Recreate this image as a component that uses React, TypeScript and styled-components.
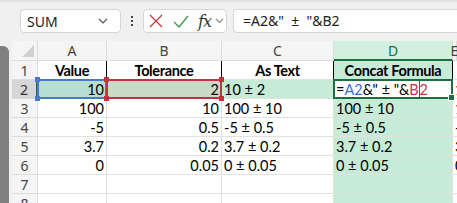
import React from 'react';
import styled, { createGlobalStyle, css } from 'styled-components';

const GlobalStyle = createGlobalStyle`
  html, body {
    margin: 0;
    padding: 0;
    background: #f0f0f0;
    overflow: hidden;
  }
  body {
    font-family: "Noto Sans", "Open Sans", sans-serif;
  }
`;

const DARK_GREEN = '#1e6e42';
const GRID_LINE = '#e1e1e1';
const COL_FILL = '#c6ebd7';

interface CellDef {
  text: React.ReactNode;
  align?: 'left' | 'right' | 'center';
  fill?: string;
  mark?: 'blue' | 'red' | 'active';
  bold?: boolean;
  edge?: boolean;
}

const rows: CellDef[][] = [
  [
    { text: 'Value', align: 'center', bold: true, edge: true },
    { text: 'Tolerance', align: 'center', bold: true, edge: true },
    { text: 'As Text', align: 'center', bold: true, edge: true },
    { text: 'Concat Formula', align: 'center', bold: true, edge: true, fill: COL_FILL },
    { text: '' },
  ],
  [
    { text: '10', align: 'right', fill: '#b5dfd3', mark: 'blue' },
    { text: '2', align: 'right', fill: '#c9dbc7', mark: 'red' },
    { text: '10 ± 2', fill: COL_FILL },
    { text: 'formula', mark: 'active', fill: '#fff' },
    { text: '10 ± 2' },
  ],
  [
    { text: '100', align: 'right' },
    { text: '10', align: 'right' },
    { text: '100 ± 10' },
    { text: '100 ± 10', fill: COL_FILL },
    { text: '100 ± 10' },
  ],
  [
    { text: '-5', align: 'right' },
    { text: '0.5', align: 'right' },
    { text: '-5 ± 0.5' },
    { text: '-5 ± 0.5', fill: COL_FILL },
    { text: '-5 ± 0.5' },
  ],
  [
    { text: '3.7', align: 'right' },
    { text: '0.2', align: 'right' },
    { text: '3.7 ± 0.2' },
    { text: '3.7 ± 0.2', fill: COL_FILL },
    { text: '3.7 ± 0.2' },
  ],
  [
    { text: '0', align: 'right' },
    { text: '0.05', align: 'right' },
    { text: '0 ± 0.05' },
    { text: '0 ± 0.05', fill: COL_FILL },
    { text: '0 ± 0.05' },
  ],
  [{ text: '' }, { text: '' }, { text: '' }, { text: '', fill: COL_FILL }, { text: '' }],
  [{ text: '' }, { text: '' }, { text: '' }, { text: '', fill: COL_FILL }, { text: '' }],
];

const columns = ['A', 'B', 'C', 'D', 'E'];

export default function App() {
  return (
    <>
      <GlobalStyle />
      <Page>
        <Toolbar>
          <NameBox>
            <span>SUM</span>
            <svg width="10" height="6" viewBox="0 0 10 6">
              <path d="M1 1l4 4 4-4" fill="none" stroke="#555" strokeWidth="1.2" />
            </svg>
          </NameBox>
          <Dots>
            <i />
            <i />
            <i />
          </Dots>
          <IconBox>
            <svg width="14" height="14" viewBox="0 0 14 14">
              <path d="M1 1l12 12M13 1L1 13" stroke="#d13438" strokeWidth="1.3" />
            </svg>
            <svg width="16" height="13" viewBox="0 0 16 13">
              <path d="M1 7l5 5L15 1" fill="none" stroke="#3a9a4a" strokeWidth="1.3" />
            </svg>
            <Fx>fx</Fx>
            <svg width="9" height="6" viewBox="0 0 9 6">
              <path d="M1 1l3.5 3.5L8 1" fill="none" stroke="#888" strokeWidth="1.1" />
            </svg>
          </IconBox>
          <FormulaInput>=A2&amp;"&nbsp;&nbsp;±&nbsp;&nbsp;"&amp;B2</FormulaInput>
        </Toolbar>
        <Sheet>
          <Strip />
          <Grid>
            <Corner>
              <svg width="12" height="12" viewBox="0 0 12 12">
                <path d="M12 0V12H0Z" fill="#d0d0d0" />
              </svg>
            </Corner>
            {columns.map((c) => (
              <ColHeader key={c} $active={c === 'D'}>
                {c}
              </ColHeader>
            ))}
            {rows.map((row, r) => (
              <React.Fragment key={r}>
                <RowHeader $active={r === 1}>{r + 1}</RowHeader>
                {row.map((cell, i) => (
                  <Cell
                    key={i}
                    $align={cell.align ?? 'left'}
                    $fill={cell.fill}
                    $mark={cell.mark}
                    $bold={cell.bold}
                    $edge={cell.edge}
                  >
                    {cell.mark === 'active' ? (
                      <Formula>
                        =<Ref $c="#3a6fd8">A2</Ref>&amp;" ± "&amp;<Ref $c="#d2303f">B</Ref>
                        <Caret />
                        <Ref $c="#d2303f">2</Ref>
                      </Formula>
                    ) : (
                      cell.text
                    )}
                    {cell.mark && cell.mark !== 'active' && (
                      <>
                        <Handle $mark={cell.mark} $pos="tl" />
                        <Handle $mark={cell.mark} $pos="bl" />
                        <Handle $mark={cell.mark} $pos="tr" />
                        <Handle $mark={cell.mark} $pos="br" />
                      </>
                    )}
                    {cell.mark === 'active' && <FillHandle />}
                  </Cell>
                ))}
              </React.Fragment>
            ))}
          </Grid>
        </Sheet>
      </Page>
    </>
  );
}

const Page = styled.div`
  width: 457px;
  height: 203px;
  overflow: hidden;
  background: #f0f0f0;
  border-top: 2px solid #e2e2e2;
  box-sizing: border-box;
`;

const Toolbar = styled.div`
  height: 39px;
  display: flex;
  align-items: flex-start;
  padding: 7px 0 0 20px;
  box-sizing: border-box;
`;

const boxBase = css`
  height: 24px;
  box-sizing: border-box;
  background: #fff;
  border: 1px solid #d6d6d6;
  border-radius: 4px;
`;

const NameBox = styled.div`
  ${boxBase};
  width: 101px;
  display: flex;
  align-items: center;
  justify-content: space-between;
  padding: 0 12px 0 6px;
  font-size: 14px;
  color: #222;
`;

const Dots = styled.div`
  width: 22px;
  height: 24px;
  display: flex;
  flex-direction: column;
  align-items: center;
  justify-content: center;
  gap: 2px;

  i {
    width: 2px;
    height: 2px;
    background: #444;
  }
`;

const IconBox = styled.div`
  ${boxBase};
  width: 84px;
  display: flex;
  align-items: center;
  gap: 10px;
  padding-left: 5px;

  svg:last-child {
    margin-left: -6px;
  }
`;

const Fx = styled.span`
  font-family: "DejaVu Serif", "Liberation Serif", serif;
  font-style: italic;
  font-size: 16px;
  color: #333;
  margin-left: -1px;
  letter-spacing: -1px;
`;

const FormulaInput = styled.div`
  ${boxBase};
  flex: 1;
  margin-left: 6px;
  border-right: none;
  border-radius: 4px 0 0 4px;
  padding-left: 9px;
  font-size: 14px;
  line-height: 22px;
  color: #222;
  white-space: nowrap;
`;

const Sheet = styled.div`
  display: flex;
  gap: 3px;
  height: 162px;
`;

const Strip = styled.div`
  flex: 0 0 9px;
  margin-top: 5px;
  background: #808080;
  border-top-right-radius: 6px;
`;

const Grid = styled.div`
  flex: 1;
  min-width: 0;
  display: grid;
  grid-template-columns: 26px 69px 115px 112px 119px minmax(0, 1fr);
  grid-template-rows: 20px repeat(8, 19px);
  background: #fff;
`;

const headerBase = css`
  background: #f5f5f5;
  box-sizing: border-box;
  border-right: 1px solid #dcdcdc;
  border-bottom: 1px solid #dcdcdc;
  display: flex;
  align-items: center;
  justify-content: center;
  font-size: 14px;
  color: #444;
`;

const Corner = styled.div`
  ${headerBase};
  align-items: flex-end;
  justify-content: flex-end;
  padding: 0 3px 3px 0;
`;

const ColHeader = styled.div<{ $active?: boolean }>`
  ${headerBase};
  ${(p) =>
    p.$active &&
    css`
      background: #d3efdf;
      color: ${DARK_GREEN};
      border-bottom: 2px solid ${DARK_GREEN};
    `}
`;

const RowHeader = styled.div<{ $active?: boolean }>`
  ${headerBase};
  ${(p) =>
    p.$active &&
    css`
      background: #d6d6d6;
      color: #333;
      border-right: 2px solid ${DARK_GREEN};
    `}
`;

const markColor = { blue: '#4a78cc', red: '#c4323d', active: DARK_GREEN };

const Cell = styled.div<{
  $align: 'left' | 'right' | 'center';
  $fill?: string;
  $mark?: 'blue' | 'red' | 'active';
  $bold?: boolean;
  $edge?: boolean;
}>`
  position: relative;
  box-sizing: border-box;
  min-width: 0;
  background: ${(p) => p.$fill ?? '#fff'};
  border-right: 1px solid ${(p) => (p.$edge ? '#000' : GRID_LINE)};
  border-bottom: 1px solid ${GRID_LINE};
  display: flex;
  align-items: center;
  justify-content: ${(p) =>
    p.$align === 'right' ? 'flex-end' : p.$align === 'center' ? 'center' : 'flex-start'};
  padding: 0 2px 0 2px;
  font-family: "Lato", "Liberation Sans", sans-serif;
  font-size: ${(p) => (p.$bold ? '14.5px' : '14.5px')};
  letter-spacing: ${(p) => (p.$bold ? '-0.35px' : '0')};
  font-weight: ${(p) => (p.$bold ? 700 : 400)};
  color: #000;
  white-space: nowrap;

  ${(p) =>
    p.$mark &&
    css`
      &::after {
        content: '';
        position: absolute;
        left: -1px;
        top: -1px;
        right: -1px;
        bottom: -1px;
        border: 2px solid ${markColor[p.$mark]};
        pointer-events: none;
      }
    `}
`;

const Handle = styled.span<{ $mark: 'blue' | 'red' | 'active'; $pos: string }>`
  position: absolute;
  width: 5px;
  height: 5px;
  background: ${(p) => markColor[p.$mark]};
  z-index: ${(p) => (p.$mark === 'red' ? 2 : 1)};
  ${(p) => (p.$pos[0] === 't' ? 'top: -3px;' : 'bottom: -3px;')}
  ${(p) => (p.$pos[1] === 'l' ? 'left: -3px;' : 'right: -3px;')}
`;

const FillHandle = styled.span`
  position: absolute;
  right: -3px;
  bottom: -3px;
  width: 5px;
  height: 5px;
  background: ${DARK_GREEN};
  border: 1px solid #fff;
  z-index: 3;
`;

const Formula = styled.span`
  display: flex;
  align-items: center;
  white-space: pre;
`;

const Ref = styled.span<{ $c: string }>`
  color: ${(p) => p.$c};
`;

const Caret = styled.span`
  width: 1px;
  height: 16px;
  background: #555;
`;
